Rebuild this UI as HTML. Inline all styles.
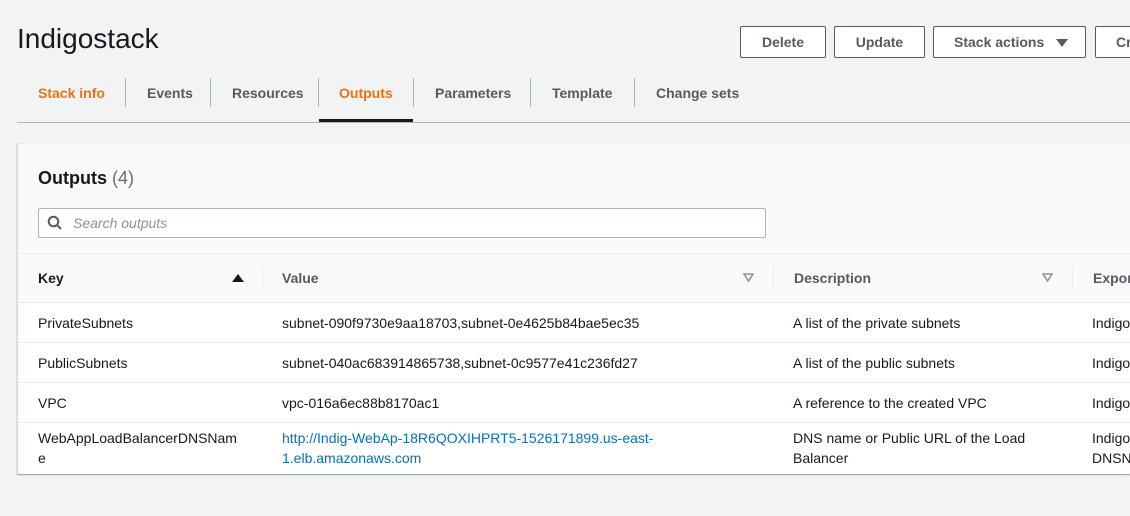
<!DOCTYPE html>
<html><head><style>
*{margin:0;padding:0;box-sizing:border-box}
body{width:1130px;height:516px;overflow:hidden;background:#f2f3f3;font-family:"Liberation Sans",sans-serif;color:#16191f;position:relative}
.a{position:absolute;white-space:nowrap}
.btn{position:absolute;top:26px;height:32px;border:1px solid #545b64;border-radius:2px;background:#fff;font-weight:bold;font-size:14px;color:#545b64;text-align:center;line-height:30px}
.tab{position:absolute;top:85px;font-size:14px;font-weight:bold;color:#545b64}
.sep{position:absolute;top:78px;width:1px;height:29px;background:#aab7b8}
.row{position:absolute;left:18px;width:1112px;border-top:1px solid #eaeded;background:#fff;font-size:14px}
.row span{position:absolute;top:10px;line-height:20px}
</style></head><body>
<div class="a" style="left:17px;top:23px;font-size:28px;">Indigostack</div>
<div class="btn" style="left:740px;width:86px">Delete</div>
<div class="btn" style="left:834px;width:91px">Update</div>
<div class="btn" style="left:933px;width:153px;text-align:left;padding-left:20px">Stack actions <svg style="margin-left:8px;vertical-align:-1px" width="12" height="10" viewBox="0 0 12 10"><path d="M0 1h12L6 9z" fill="#545b64"/></svg></div>
<div class="btn" style="left:1095px;width:60px;text-align:left;padding-left:20px">Cr</div>

<div class="tab" style="left:38px;color:#ec7211">Stack info</div>
<div class="sep" style="left:125px"></div>
<div class="tab" style="left:147px">Events</div>
<div class="sep" style="left:210px"></div>
<div class="tab" style="left:232px">Resources</div>
<div class="sep" style="left:318px"></div>
<div class="tab" style="left:339px;color:#ec7211">Outputs</div>
<div class="sep" style="left:413px"></div>
<div class="tab" style="left:435px">Parameters</div>
<div class="sep" style="left:530px"></div>
<div class="tab" style="left:552px">Template</div>
<div class="sep" style="left:634px"></div>
<div class="tab" style="left:656px">Change sets</div>
<div class="a" style="left:17px;top:122px;width:1113px;height:1px;background:#aab7b8"></div>
<div class="a" style="left:319px;top:119px;width:94px;height:3px;background:#16191f"></div>

<div class="a" style="left:17px;top:143px;width:1113px;height:331px;background:#fafafa;border-top:1px solid #eaeded;border-left:1px solid #d5dbdb;box-shadow:0 1px 1px 0 rgba(0,28,36,.4)"></div>
<div class="a" style="left:38px;top:168px;font-size:18px;font-weight:bold">Outputs <span style="font-weight:normal;color:#687078">(4)</span></div>
<div class="a" style="left:38px;top:208px;width:728px;height:30px;background:#fff;border:1px solid #aab7b8;border-radius:2px"></div>
<svg class="a" style="left:47px;top:215px" width="16" height="16" viewBox="0 0 16 16"><circle cx="6.5" cy="6.5" r="4.8" fill="none" stroke="#545b64" stroke-width="2"/><path d="M10 10l4 4" stroke="#545b64" stroke-width="2"/></svg>
<div class="a" style="left:73px;top:215px;font-size:14px;font-style:italic;color:#879596">Search outputs</div>
<div class="a" style="left:18px;top:253px;width:1112px;height:1px;background:#eaeded"></div>
<div class="a" style="left:38px;top:270px;font-size:14px;font-weight:bold">Key</div>
<svg class="a" style="left:232px;top:273px" width="12" height="10" viewBox="0 0 12 10"><path d="M0 9h12L6 1z" fill="#16191f"/></svg>
<div class="a" style="left:262px;top:266px;width:1px;height:24px;background:#eaeded"></div>
<div class="a" style="left:282px;top:270px;font-size:14px;font-weight:bold;color:#545b64">Value</div>
<svg class="a" style="left:743px;top:273px" width="11" height="9" viewBox="0 0 11 9"><path d="M1 1h9L5.5 8z" fill="none" stroke="#879596" stroke-width="1.6"/></svg>
<div class="a" style="left:773px;top:266px;width:1px;height:24px;background:#eaeded"></div>
<div class="a" style="left:794px;top:270px;font-size:14px;font-weight:bold;color:#545b64">Description</div>
<svg class="a" style="left:1042px;top:273px" width="11" height="9" viewBox="0 0 11 9"><path d="M1 1h9L5.5 8z" fill="none" stroke="#879596" stroke-width="1.6"/></svg>
<div class="a" style="left:1072px;top:266px;width:1px;height:24px;background:#eaeded"></div>
<div class="a" style="left:1093px;top:270px;font-size:14px;font-weight:bold;color:#545b64">Expor</div>

<div class="row" style="top:302px;height:40px"><span style="left:20px">PrivateSubnets</span><span style="left:264px">subnet-090f9730e9aa18703,subnet-0e4625b84bae5ec35</span><span style="left:775px">A list of the private subnets</span><span style="left:1074px">Indigo</span></div>
<div class="row" style="top:342px;height:40px"><span style="left:20px">PublicSubnets</span><span style="left:264px">subnet-040ac683914865738,subnet-0c9577e41c236fd27</span><span style="left:775px">A list of the public subnets</span><span style="left:1074px">Indigo</span></div>
<div class="row" style="top:382px;height:40px"><span style="left:20px">VPC</span><span style="left:264px">vpc-016a6ec88b8170ac1</span><span style="left:775px">A reference to the created VPC</span><span style="left:1074px">Indigo</span></div>
<div class="row" style="top:422px;height:51px"><span style="left:20px;top:5px">WebAppLoadBalancerDNSNam<br>e</span><span style="left:264px;top:5px;color:#0073bb">http://Indig-WebAp-18R6QOXIHPRT5-1526171899.us-east-<br>1.elb.amazonaws.com</span><span style="left:775px;top:5px">DNS name or Public URL of the Load<br>Balancer</span><span style="left:1074px;top:5px">Indigo<br>DNSN</span></div>
</body></html>
